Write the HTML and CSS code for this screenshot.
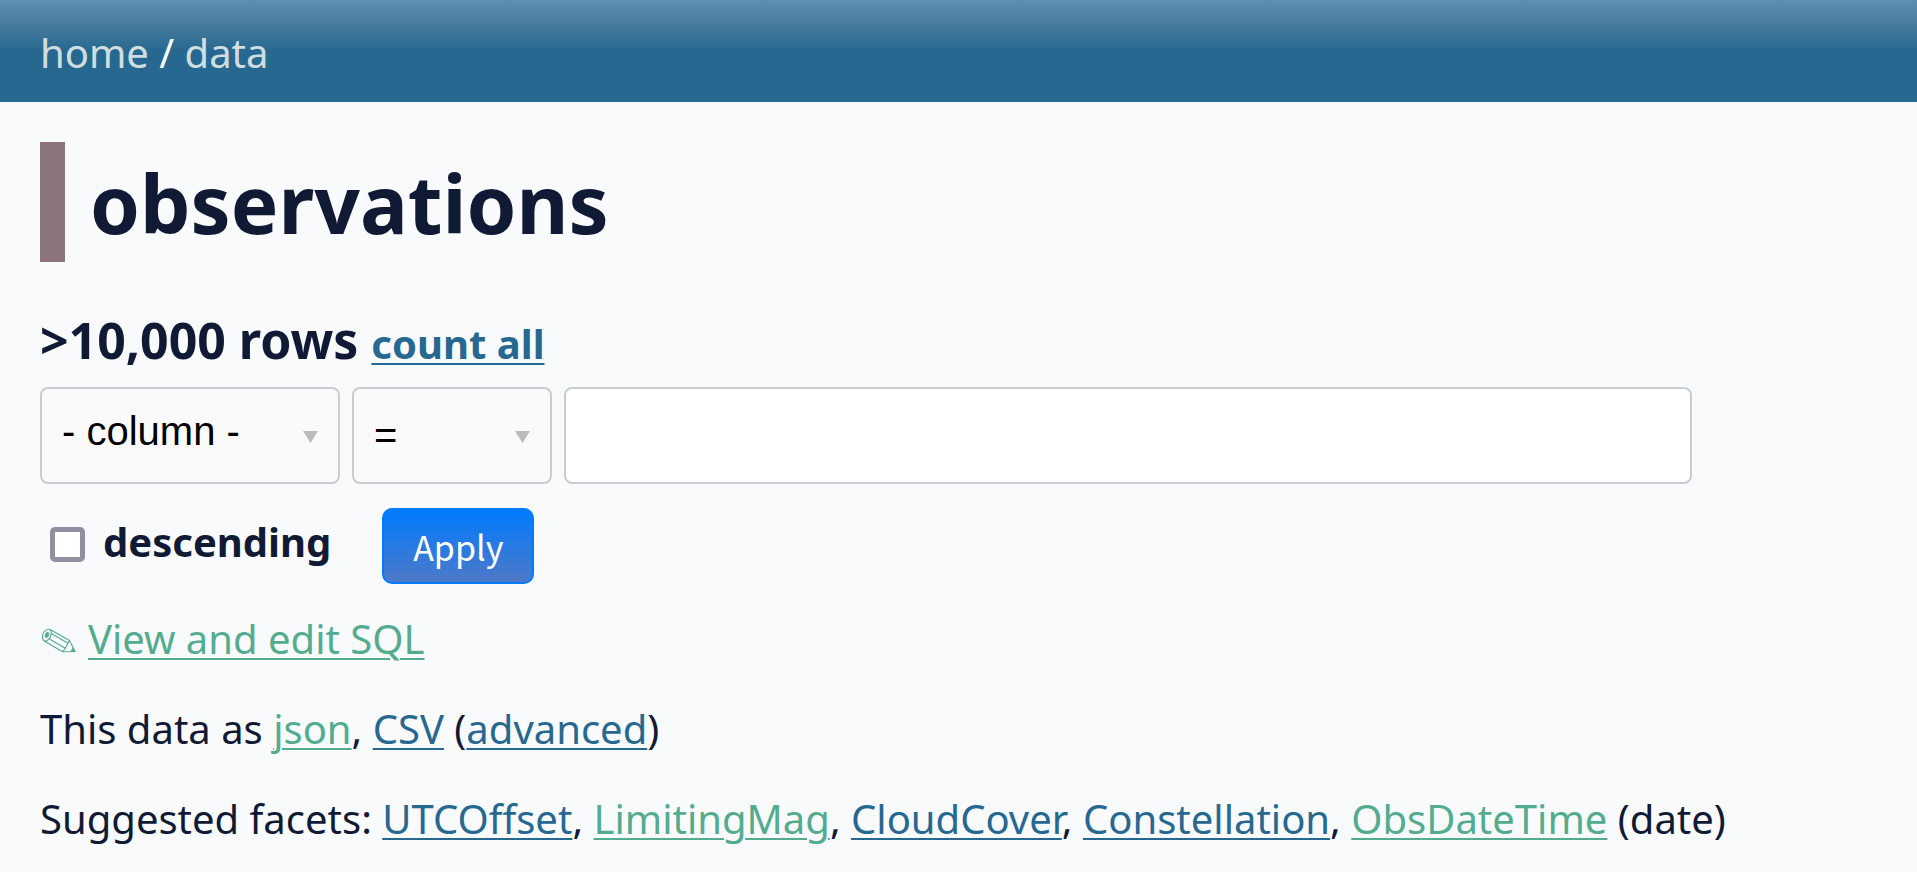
FILE: index.html
```html
<!DOCTYPE html>
<html lang="en">
<head>
<meta charset="utf-8">
<title>data: observations</title>
<link rel="stylesheet" href="styles.css">
</head>
<body>
<header class="topbar"><nav class="crumbs"><a href="#">home</a> / <a href="#">data</a></nav></header>
<main class="content">
  <h1 class="title">observations</h1>
  <h3 class="count">&gt;10,000 rows <a class="count-link" href="#">count all</a></h3>
  <form class="filters">
    <div class="filter-row">
      <div class="select select-column"><span class="value">- column -</span><svg class="arrow" viewBox="0 0 15 12"><path d="M0 0h15L7.500 12z"/></svg></div>
      <div class="select select-op"><span class="value">=</span><svg class="arrow" viewBox="0 0 15 12"><path d="M0 0h15L7.500 12z"/></svg></div>
      <input class="filter-value" type="text" aria-label="Filter value">
    </div>
    <div class="sort-row">
      <label class="desc"><input class="check" type="checkbox"><span>descending</span></label>
      <button class="apply" type="button">Apply</button>
    </div>
  </form>
  <p class="line"><a class="plain" href="#" aria-label="Edit"><svg class="pencil" viewBox="0 0 38 26"><path d="M10 1.500 29.500 12.500 35 23.500 22.500 23.700 3.500 12.500C1.800 10 2.200 6 4.300 3.500 6 1.300 8 .8 10 1.500zM10 1.500C12 3.500 11.500 8 9 10.800 7.300 12.800 5 13.500 3.500 12.500M11.300 5.500 28 15.200M9 10.800 25.300 20.300M29.500 12.500 28 15.200 25.300 20.300 22.500 23.700"/><ellipse class="lead" cx="7" cy="7" rx="1.500" ry="2.500" transform="rotate(25 7 7)"/><path class="lead" d="M33.200 20 35 23.500 31 23.500z"/></svg></a> <a class="seen" href="#">View and edit SQL</a></p>
  <p class="line">This data as <a class="seen" href="#">json</a>, <a href="#">CSV</a> (<a href="#">advanced</a>)</p>
  <p class="line">Suggested facets: <a href="#">UTCOffset</a>, <a class="seen" href="#">LimitingMag</a>, <a href="#">CloudCover</a>, <a href="#">Constellation</a>, <a class="seen" href="#">ObsDateTime</a> (date)</p>
</main>
</body>
</html>
```
FILE: styles.css
```css
* { box-sizing: border-box; }
body {
  margin: 0;
  background: #f9fafc;
  color: #111a35;
  font: 40px/60px "Noto Sans", sans-serif;
  overflow: hidden;
}
a { color: #276890; text-decoration-thickness: 2px; text-underline-offset: 4px; }
.topbar {
  height: 102px;
  padding: 23px 40px 0;
  background: linear-gradient(to bottom, #5f8fb0 0, #44799c 28px, #276890 51px);
}
.crumbs { color: #fff; line-height: 60px; }
.crumbs a { color: rgba(255, 255, 244, 0.8); text-decoration: none; }
.content { padding: 40px 40px 0; }
.title {
  height: 120px;
  margin: 0;
  padding-left: 25px;
  border-left: 25px solid #8b767d;
  font-size: 80px;
  line-height: 122px;
}
.count { height: 75px; margin: 40px 0 0; font-size: 50px; line-height: 77px; }
.count-link { font-size: 40px; }
.filters { margin-top: 10px; }
.filter-row { display: flex; gap: 12px; height: 97px; }
.select {
  display: flex;
  justify-content: space-between;
  padding: 0 20px;
  border: 2px solid #ccc;
  border-radius: 8px;
  background: #fafafa;
  color: #000;
  font-family: "Liberation Sans", sans-serif;
}
.select-column { width: 300px; }
.select-op { width: 200px; }
.value { line-height: 85px; }
.select-op .value { line-height: 93px; }
.arrow { width: 15px; height: 12px; margin-top: 42px; fill: #bbb; }
.filter-value {
  width: 1128px;
  border: 2px solid #ccc;
  border-radius: 8px;
  background: #fff;
  font: 40px "Liberation Sans", sans-serif;
}
.sort-row { display: flex; gap: 51px; height: 100px; padding-top: 24px; }
.desc { display: flex; gap: 18px; padding-left: 10px; line-height: 68px; font-weight: bold; }
.check {
  appearance: none;
  width: 35px;
  height: 35px;
  margin: 19px 0 0;
  border: 5px solid #9190a0;
  border-radius: 5px;
  background: #fff;
}
.apply {
  width: 152px;
  height: 76px;
  padding: 0;
  border: 2px solid #007bff;
  border-radius: 10px;
  background: linear-gradient(180deg, #007bff 0%, #4e79c7 100%);
  color: #fff;
  font: 400 34px "Noto Sans CJK JP", sans-serif;
}
.line { margin: 0 0 30px; }
.seen, .plain { color: #54ac8e; }
.plain { text-decoration: none; }
.pencil {
  width: 38px;
  height: 26px;
  margin-left: -0.5px;
  fill: none;
  stroke: currentColor;
  stroke-width: 1.1;
  stroke-linejoin: round;
}
.lead { fill: currentColor; }
.filters + .line { margin-top: 25px; }
```
